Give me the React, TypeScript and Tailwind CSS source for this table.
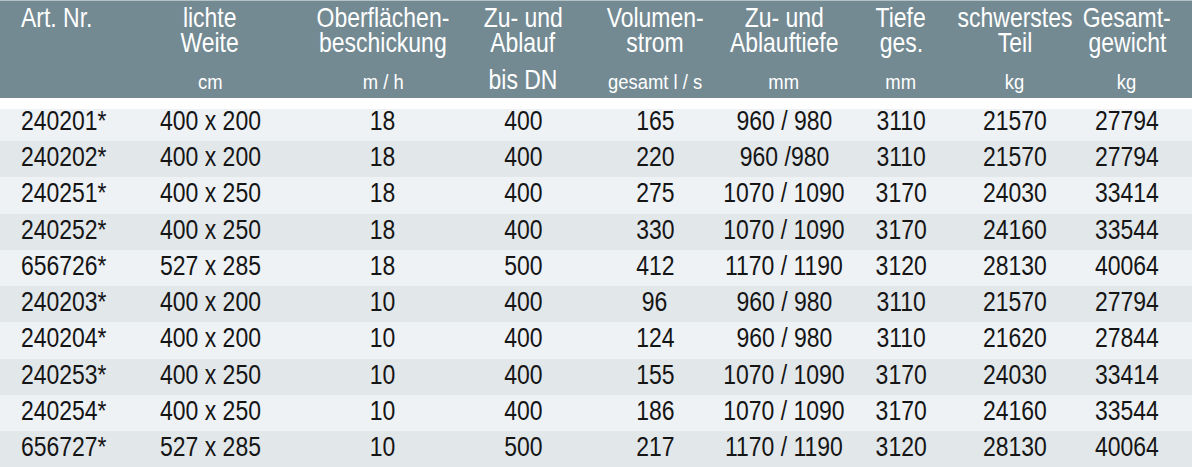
const font = "font-['Liberation_Sans',Arial,sans-serif]";

const cols = "grid grid-cols-[124px_172px_174px_106px_158px_100px_134px_94px_130px]";

const head1 = ['Art. Nr.', 'lichte', 'Oberflächen-', 'Zu- und', 'Volumen-', 'Zu- und', 'Tiefe', 'schwerstes', 'Gesamt-'];
const head2 = ['', 'Weite', 'beschickung', 'Ablauf', 'strom', 'Ablauftiefe', 'ges.', 'Teil', 'gewicht'];
const head3: { t: string; big?: boolean }[] = [
  { t: '' },
  { t: 'cm' },
  { t: 'm / h' },
  { t: 'bis DN', big: true },
  { t: 'gesamt l / s' },
  { t: 'mm' },
  { t: 'mm' },
  { t: 'kg' },
  { t: 'kg' },
];

const rows = [
  ['240201*', '400 x 200', '18', '400', '165', '960 / 980', '3110', '21570', '27794'],
  ['240202*', '400 x 200', '18', '400', '220', '960 /980', '3110', '21570', '27794'],
  ['240251*', '400 x 250', '18', '400', '275', '1070 / 1090', '3170', '24030', '33414'],
  ['240252*', '400 x 250', '18', '400', '330', '1070 / 1090', '3170', '24160', '33544'],
  ['656726*', '527 x 285', '18', '500', '412', '1170 / 1190', '3120', '28130', '40064'],
  ['240203*', '400 x 200', '10', '400', '96', '960 / 980', '3110', '21570', '27794'],
  ['240204*', '400 x 200', '10', '400', '124', '960 / 980', '3110', '21620', '27844'],
  ['240253*', '400 x 250', '10', '400', '155', '1070 / 1090', '3170', '24030', '33414'],
  ['240254*', '400 x 250', '10', '400', '186', '1070 / 1090', '3170', '24160', '33544'],
  ['656727*', '527 x 285', '10', '500', '217', '1170 / 1190', '3120', '28130', '40064'],
];

// condensed look: Liberation Sans squeezed horizontally
function Cell({
  i,
  children,
  small = false,
  className = '',
}: {
  i: number;
  children: React.ReactNode;
  small?: boolean;
  className?: string;
}) {
  const squeeze = small ? 'scale-x-[0.92]' : 'scale-x-[0.82]';
  return (
    <div className={`flex whitespace-nowrap ${i === 0 ? 'justify-start pl-[21px]' : 'justify-center'} ${className}`}>
      <span className={`inline-block ${squeeze} ${i === 0 ? 'origin-left' : 'origin-center'}`}>{children}</span>
    </div>
  );
}

export default function App() {
  return (
    <div className={`w-[1192px] h-[467px] bg-white overflow-hidden ${font}`}>
      <div className="h-[98px] bg-[#738a93] border-t border-[#b4c1c6] text-white text-[28px] pt-[4px]">
        <div className={`${cols} leading-[25px]`}>
          {head1.map((t, i) => (
            <Cell key={i} i={i}>{t}</Cell>
          ))}
        </div>
        <div className={`${cols} leading-[25px]`}>
          {head2.map((t, i) => (
            <Cell key={i} i={i}>{t}</Cell>
          ))}
        </div>
        <div className={`${cols} items-baseline mt-[12px] leading-[25px]`}>
          {head3.map((h, i) => (
            <Cell key={i} i={i} small={!h.big} className={h.big ? 'text-[28px]' : 'text-[20px]'}>
              {h.t || '\u00a0'}
            </Cell>
          ))}
        </div>
      </div>
      <div className="h-[11px] bg-white" />
      <div className="text-[28px] text-[#151515]">
        {rows.map((r, ri) => (
          <div
            key={ri}
            className={`${cols} ${ri === 0 ? 'h-[32px] leading-[24px]' : 'h-[36.25px] leading-[32px]'} ${
              ri % 2 === 0 ? 'bg-[#eef2f5]' : 'bg-[#e2e7ea]'
            }`}
          >
            {r.map((v, i) => (
              <Cell key={i} i={i}>{v}</Cell>
            ))}
          </div>
        ))}
      </div>
    </div>
  );
}
